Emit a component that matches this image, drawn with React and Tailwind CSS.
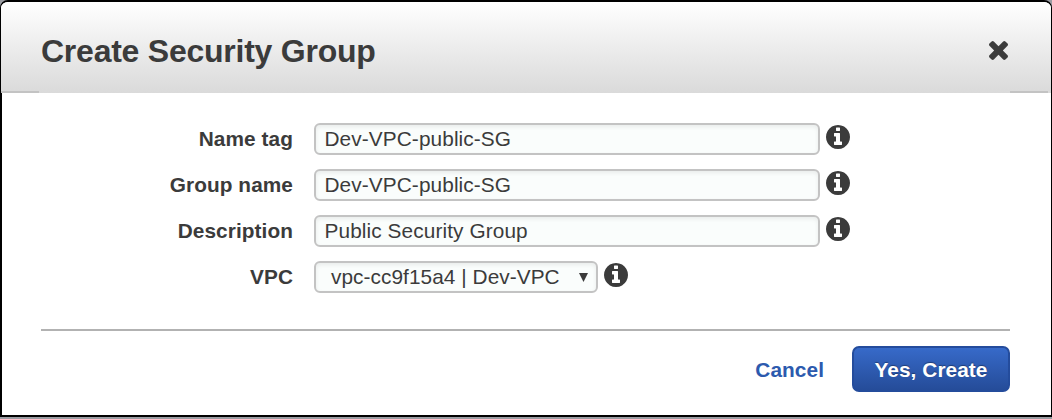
const fields = [
  { label: 'Name tag', value: 'Dev-VPC-public-SG' },
  { label: 'Group name', value: 'Dev-VPC-public-SG' },
  { label: 'Description', value: 'Public Security Group' },
];

function InfoIcon() {
  return (
    <svg viewBox="128 128 1536 1536" className="mt-[2px] ml-[6px] size-6 shrink-0" fill="#3b3b3b">
      <path d="M1152 1376v-160q0-14-9-23t-23-9h-96v-512q0-14-9-23t-23-9h-320q-14 0-23 9t-9 23v160q0 14 9 23t23 9h96v320h-96q-14 0-23 9t-9 23v160q0 14 9 23t23 9h448q14 0 23-9t9-23zm-128-896v-160q0-14-9-23t-23-9h-192q-14 0-23 9t-9 23v160q0 14 9 23t23 9h192q14 0 23-9t9-23zm640 416q0 209-103 385.500t-279.500 279.500-385.500 103-385.500-103-279.500-279.500-103-385.500 103-385.500 279.500-279.500 385.500-103 385.500 103 279.500 279.500 103 385.500z" />
    </svg>
  );
}

function CloseIcon() {
  return (
    <svg viewBox="302 366 1188 1188" className="block size-[19px]" fill="#3b3b3b">
      <path d="M1490 1322q0 40-28 68l-136 136q-28 28-68 28t-68-28l-294-294-294 294q-28 28-68 28t-68-28l-136-136q-28-28-28-68t28-68l294-294-294-294q-28-28-28-68t28-68l136-136q28-28 68-28t68 28l294 294 294-294q28-28 68-28t68 28l136 136q28 28 28 68t-28 68l-294 294 294 294q28 28 28 68z" />
    </svg>
  );
}

function Row({ label, children }) {
  return (
    <div className="flex h-8 items-start">
      <label className="w-[291px] shrink-0 text-right text-[20.800px] leading-8 font-bold tracking-[0.080px]">{label}</label>
      <div className="ml-[21px] flex">{children}</div>
      <InfoIcon />
    </div>
  );
}

export default function App() {
  return (
    <div className="h-[419px] w-[1052px] overflow-hidden bg-[#9a9ca2] font-['Liberation_Sans',Arial,sans-serif] text-[#3b3b3b]">
      <div className="flex h-[417px] flex-col overflow-hidden rounded-t-[8px] border-t-2 border-r border-b-2 border-l border-black bg-white">
        <header className="flex h-[91px] shrink-0 flex-col bg-linear-to-b from-white to-[#dadada]">
          <div className="flex h-[89px] items-start justify-between pr-[43px] pl-10">
            <h1 className="mt-[29px] text-[32px] leading-10 font-bold tracking-[-0.24px]">Create Security Group</h1>
            <button type="button" aria-label="Close" className="mt-[39px]">
              <CloseIcon />
            </button>
          </div>
          <div className="flex h-[2px] justify-between pr-[3px]">
            <div className="w-[38px] bg-[#c3c3c3]" />
            <div className="w-[38px] bg-[#c3c3c3]" />
          </div>
        </header>
        <main className="flex-1 border-l border-black">
          <form className="flex flex-col gap-[14px] pt-[30px]">
            {fields.map((f) => (
              <Row key={f.label} label={f.label}>
                <input
                  readOnly
                  value={f.value}
                  className="h-8 w-[506px] rounded-[6px] border-2 border-[#c3c3c3] bg-[#fafdfc] px-[8.500px] text-[20.800px] tracking-[0.1px] shadow-[inset_0_2px_4px_rgba(0,0,0,0.07)] outline-none"
                />
              </Row>
            ))}
            <Row label="VPC">
              <button
                type="button"
                className="flex h-8 w-[284px] items-center justify-between rounded-[6px] border-2 border-[#c3c3c3] bg-[#fafdfc] pr-[8px] pl-[15px] text-[20.800px] tracking-[0.06px] shadow-[inset_0_2px_4px_rgba(0,0,0,0.07)]"
              >
                <span className="whitespace-nowrap">vpc-cc9f15a4 | Dev-VPC</span>
                <svg viewBox="0 0 9 9" className="h-[9px] w-[9px]" fill="#3b3b3b">
                  <path d="M0 0h9L4.500 9z" />
                </svg>
              </button>
            </Row>
          </form>
          <footer className="mt-9 mr-[41px] ml-[39px] flex justify-end border-t-2 border-[#b2b2b2] pt-[15px] text-[20.800px] font-bold">
            <button type="button" className="mr-7 h-[46px] pt-[2px] tracking-[0.08px] text-[#2c5aae]">Cancel</button>
            <button
              type="button"
              className="h-[46px] w-[158px] rounded-[7px] border-2 border-[#244c9c] bg-linear-to-b from-[#376ac9] to-[#254c99] pt-[2px] tracking-[0.08px] whitespace-nowrap text-white [text-shadow:0_-1px_1px_rgba(0,0,0,0.35)]"
            >
              Yes, Create
            </button>
          </footer>
        </main>
      </div>
    </div>
  );
}
